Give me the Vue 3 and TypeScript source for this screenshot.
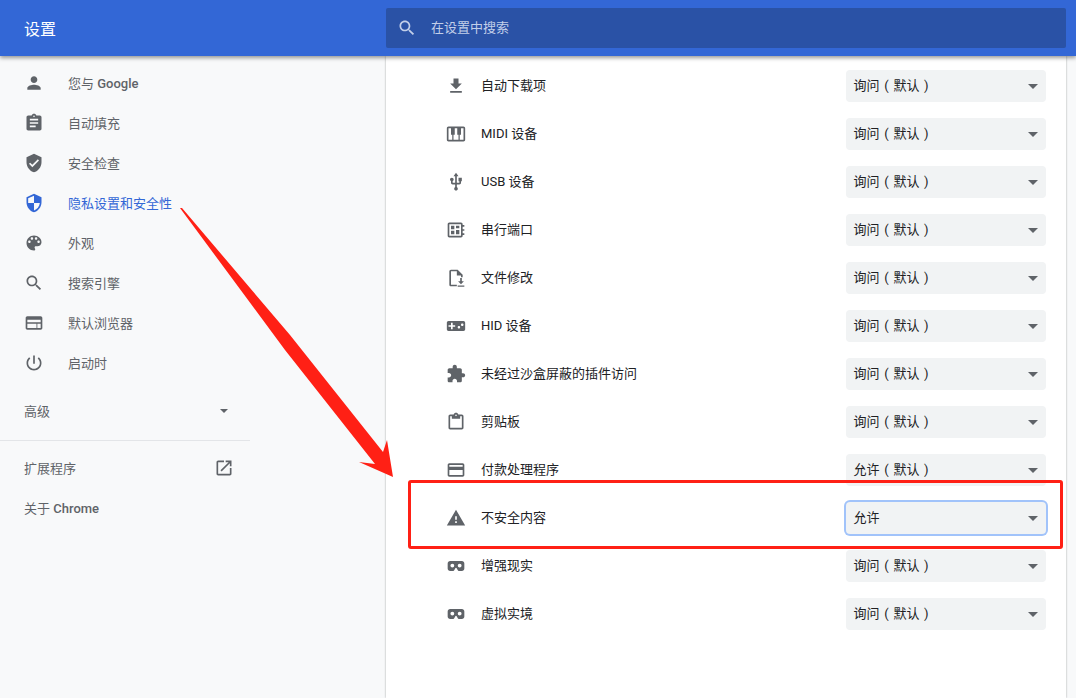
<template>
  <div class="page">
    <header class="topbar">
      <h1 class="title">设置</h1>
      <div class="search">
        <svg class="search-icon" viewBox="0 0 24 24"><path :d="icons.search" /></svg>
        <span class="lift">在设置中搜索</span>
      </div>
    </header>

    <div class="body">
      <nav class="sidebar">
        <a
          v-for="item in navItems"
          :key="item.label"
          class="nav-item"
          :class="{ active: item.active }"
        >
          <svg class="icon" viewBox="0 0 24 24"><path :d="item.icon" /></svg>
          <span class="lift">{{ item.label }}<b v-if="item.latin" class="latin">{{ item.latin }}</b></span>
        </a>
        <div class="advanced">
          <span class="lift">高级</span>
          <i class="caret small"></i>
        </div>
        <div class="divider"></div>
        <a class="link-row">
          <span class="lift">扩展程序</span>
          <svg class="icon" viewBox="0 0 24 24"><path :d="icons.openNew" /></svg>
        </a>
        <a class="link-row">
          <span class="lift">关于 <b class="latin">Chrome</b></span>
        </a>
      </nav>

      <main class="card">
        <div v-for="row in rows" :key="row.label" class="row">
          <svg class="icon" viewBox="0 0 24 24"><path :d="row.icon" fill-rule="evenodd" /></svg>
          <span class="row-label lift">{{ row.label }}</span>
          <div class="select" :class="{ focused: row.focused }">
            <span class="lift">{{ row.value || '询问 ( 默认 )' }}</span>
            <i class="caret"></i>
          </div>
        </div>
      </main>
      <div class="gutter"></div>
    </div>

    <!-- red markup drawn on top of the screenshot -->
    <div class="mark-box"></div>
    <svg class="mark-arrow" viewBox="0 0 1076 698">
      <polygon points="180,208 285,350 375,464 359,462 393,477 387,440 383,452 290,335 182,208" />
    </svg>
  </div>
</template>

<script setup lang="ts">
const icons = {
  search:
    'M15.5 14h-.79l-.28-.27C15.41 12.59 16 11.11 16 9.5 16 5.91 13.09 3 9.5 3S3 5.91 3 9.5 5.91 16 9.5 16c1.61 0 3.09-.59 4.23-1.57l.27.28v.79l5 4.99L20.49 19l-4.99-5zm-6 0C7.01 14 5 11.99 5 9.5S7.01 5 9.5 5 14 7.01 14 9.5 11.99 14 9.5 14z',
  openNew:
    'M19 19H5V5h7V3H5c-1.11 0-2 .9-2 2v14c0 1.1.89 2 2 2h14c1.1 0 2-.9 2-2v-7h-2v7zM14 3v2h3.59l-9.83 9.83 1.41 1.41L19 6.41V10h2V3h-7z',
  vr: 'M5 6h14c1.7 0 3 1.3 3 3v6c0 1.7-1.3 3-3 3h-3c-1 0-1.8-.6-2.2-1.5L13 15c-.3-.6-.6-1-1-1s-.7.4-1 1l-.8 1.5C9.8 17.4 9 18 8 18H5c-1.7 0-3-1.3-3-3V9c0-1.7 1.3-3 3-3zM7.6 9.2a2.3 2.3 0 1 0 0 4.6 2.3 2.3 0 0 0 0-4.6zM16.4 9.2a2.3 2.3 0 1 0 0 4.6 2.3 2.3 0 0 0 0-4.6z'
}

interface NavItem {
  label: string
  latin?: string
  icon: string
  active?: boolean
}

interface Row {
  label: string
  icon: string
  value?: string
  focused?: boolean
}

const navItems: NavItem[] = [
  {
    label: '您与 ',
    latin: 'Google',
    icon: 'M12 12c2.21 0 4-1.79 4-4s-1.79-4-4-4-4 1.79-4 4 1.79 4 4 4zm0 2c-2.67 0-8 1.34-8 4v2h16v-2c0-2.66-5.33-4-8-4z'
  },
  {
    label: '自动填充',
    icon: 'M19 3h-4.18C14.4 1.84 13.3 1 12 1c-1.3 0-2.4.84-2.82 2H5c-1.1 0-2 .9-2 2v14c0 1.1.9 2 2 2h14c1.1 0 2-.9 2-2V5c0-1.1-.9-2-2-2zm-7 0c.55 0 1 .45 1 1s-.45 1-1 1-1-.45-1-1 .45-1 1-1zm2 14H7v-2h7v2zm3-4H7v-2h10v2zm0-4H7V7h10v2z'
  },
  {
    label: '安全检查',
    icon: 'M12 1L3 5v6c0 5.55 3.84 10.74 9 12 5.16-1.26 9-6.45 9-12V5l-9-4zm-2 16l-4-4 1.41-1.41L10 14.17l6.59-6.59L18 9l-8 8z'
  },
  {
    label: '隐私设置和安全性',
    active: true,
    icon: 'M12 1L3 5v6c0 5.55 3.84 10.74 9 12 5.16-1.26 9-6.45 9-12V5l-9-4zm0 10.99h7c-.53 4.12-3.28 7.79-7 8.94V12H5V6.3l7-3.11v8.8z'
  },
  {
    label: '外观',
    icon: 'M12 3c-4.97 0-9 4.03-9 9s4.03 9 9 9c.83 0 1.5-.67 1.5-1.5 0-.39-.15-.74-.39-1.01-.23-.26-.38-.61-.38-.99 0-.83.67-1.5 1.5-1.5H16c2.76 0 5-2.24 5-5 0-4.42-4.03-8-9-8zm-5.5 9c-.83 0-1.5-.67-1.5-1.5S5.67 9 6.5 9 8 9.67 8 10.5 7.33 12 6.5 12zm3-4C8.67 8 8 7.33 8 6.5S8.67 5 9.5 5s1.5.67 1.5 1.5S10.33 8 9.5 8zm5 0c-.83 0-1.5-.67-1.5-1.5S13.67 5 14.5 5s1.5.67 1.5 1.5S15.33 8 14.5 8zm3 4c-.83 0-1.5-.67-1.5-1.5S16.67 9 17.5 9s1.5.67 1.5 1.5-.67 1.5-1.5 1.5z'
  },
  { label: '搜索引擎', icon: icons.search },
  {
    label: '默认浏览器',
    icon: 'M20 4H4c-1.1 0-1.99.9-1.99 2L2 18c0 1.1.9 2 2 2h16c1.1 0 2-.9 2-2V6c0-1.1-.9-2-2-2zm-5 14H4v-5h11v5zm5 0h-4v-5h4v5zm0-7H4V8h16v3z'
  },
  {
    label: '启动时',
    icon: 'M13 3h-2v10h2V3zm4.83 2.17l-1.42 1.42C17.99 7.86 19 9.81 19 12c0 3.87-3.13 7-7 7s-7-3.13-7-7c0-2.19 1.01-4.14 2.58-5.42L6.17 5.17C4.23 6.82 3 9.26 3 12c0 4.97 4.03 9 9 9s9-4.03 9-9c0-2.74-1.23-5.18-3.17-6.83z'
  }
]

const rows: Row[] = [
  { label: '自动下载项', icon: 'M19 9h-4V3H9v6H5l7 7 7-7zM5 18v2h14v-2H5z' },
  {
    label: 'MIDI 设备',
    icon: 'M21 3H3c-1.1 0-2 .9-2 2v14c0 1.1.9 2 2 2h18c1.1 0 2-.9 2-2V5c0-1.1-.9-2-2-2zM3 5h3v8h1.5v6H3zM9 19v-6h1.5V5h3v8H15v6zM16.5 19v-6H18V5h3v14z'
  },
  {
    label: 'USB 设备',
    icon: 'M15 7v4h1v2h-3V5h2l-3-4-3 4h2v8H8v-2.07c.7-.37 1.2-1.08 1.2-1.93 0-1.21-.99-2.2-2.2-2.2-1.21 0-2.2.99-2.2 2.2 0 .85.5 1.56 1.2 1.93V13c0 1.11.89 2 2 2h3v3.05c-.71.37-1.2 1.1-1.2 1.95 0 1.22.99 2.2 2.2 2.2 1.21 0 2.2-.98 2.2-2.2 0-.85-.49-1.58-1.2-1.95V15h3c1.11 0 2-.89 2-2v-2h1V7h-4z'
  },
  {
    label: '串行端口',
    icon: 'M18 3H4c-1.1 0-2 .9-2 2v14c0 1.1.9 2 2 2h14c1.1 0 2-.9 2-2v-1h2v-2h-2v-3h2v-2h-2V8h2V6h-2V5c0-1.1-.9-2-2-2zM4 5h14v14H4zM6 7h4v4H6zM12 7h4v3h-4zM6 13h4v4H6zM12 12h4v5h-4z'
  },
  {
    label: '文件修改',
    icon: 'M6 2c-1.1 0-2 .9-2 2v16c0 1.1.9 2 2 2h7v-2H6V4h7v5h5v2h2V8l-6-6H6zM17 12h2v4h2.5L18 19.5 14.5 16H17zM14 21h8v1.5h-8z'
  },
  {
    label: 'HID 设备',
    icon: 'M21 6H3c-1.1 0-2 .9-2 2v8c0 1.1.9 2 2 2h18c1.1 0 2-.9 2-2V8c0-1.1-.9-2-2-2zm-10 7H8v3H6v-3H3v-2h3V8h2v3h3v2zm4.5 2c-.83 0-1.5-.67-1.5-1.5s.67-1.5 1.5-1.5 1.5.67 1.5 1.5-.67 1.5-1.5 1.5zm4-3c-.83 0-1.5-.67-1.5-1.5S18.67 9 19.5 9s1.5.67 1.5 1.5-.67 1.5-1.5 1.5z'
  },
  {
    label: '未经过沙盒屏蔽的插件访问',
    icon: 'M20.5 11H19V7c0-1.1-.9-2-2-2h-4V3.5C13 2.12 11.88 1 10.5 1S8 2.12 8 3.5V5H4c-1.1 0-1.99.9-1.99 2v3.8H3.5c1.49 0 2.7 1.21 2.7 2.7s-1.21 2.7-2.7 2.7H2V20c0 1.1.9 2 2 2h3.8v-1.5c0-1.49 1.21-2.7 2.7-2.7 1.49 0 2.7 1.21 2.7 2.7V22H17c1.1 0 2-.9 2-2v-4h1.5c1.38 0 2.5-1.12 2.5-2.5S21.88 11 20.5 11z'
  },
  {
    label: '剪贴板',
    icon: 'M19 3h-4.18C14.4 1.84 13.3 1 12 1c-1.3 0-2.4.84-2.82 2H5c-1.1 0-2 .9-2 2v14c0 1.1.9 2 2 2h14c1.1 0 2-.9 2-2V5c0-1.1-.9-2-2-2zM5 5h2v3h10V5h2v14H5zM12 3c.55 0 1 .45 1 1s-.45 1-1 1-1-.45-1-1 .45-1 1-1z'
  },
  {
    label: '付款处理程序',
    value: '允许 ( 默认 )',
    icon: 'M20 4H4c-1.11 0-1.99.89-1.99 2L2 18c0 1.11.89 2 2 2h16c1.11 0 2-.89 2-2V6c0-1.11-.89-2-2-2zm0 14H4v-6h16v6zm0-10H4V6h16v2z'
  },
  {
    label: '不安全内容',
    value: '允许',
    focused: true,
    icon: 'M1 21h22L12 2 1 21zm12-3h-2v-2h2v2zm0-4h-2v-4h2v4z'
  },
  { label: '增强现实', icon: icons.vr },
  { label: '虚拟实境', icon: icons.vr }
]
</script>

<style scoped>
.page {
  position: relative;
  display: flex;
  flex-direction: column;
  height: 698px;
  overflow: hidden;
  background: #f8f9fa;
  font-family: Roboto, 'Noto Sans CJK SC', sans-serif;
  font-size: 13px;
  color: #5f6368;
}
.lift {
  padding-bottom: 4px;
}
.sidebar .lift {
  padding-bottom: 2px;
}
.topbar {
  position: relative;
  z-index: 2;
  display: flex;
  align-items: center;
  flex: none;
  height: 56px;
  background: #3367d6;
  box-shadow: 0 2px 4px rgba(0, 0, 0, 0.4);
}
.title {
  width: 362px;
  margin: 0 0 0 24px;
  font-size: 16px;
  font-weight: 400;
  color: #fff;
}
.search {
  display: flex;
  align-items: center;
  flex: 1;
  height: 40px;
  margin-right: 10px;
  padding-left: 11px;
  border-radius: 2px;
  background: #2a52a6;
  color: #c2cfe9;
}
.search-icon {
  width: 20px;
  height: 20px;
  margin-right: 14px;
  fill: #c2cfe9;
}
.body {
  display: flex;
  flex: 1;
  min-height: 0;
}
.sidebar {
  flex: none;
  width: 386px;
  padding-top: 7px;
}
.icon {
  flex: none;
  width: 20px;
  height: 20px;
  fill: #5f6368;
}
.nav-item {
  display: flex;
  align-items: center;
  gap: 24px;
  height: 40px;
  padding-left: 24px;
}
.nav-item.active {
  color: #3367d6;
}
.nav-item.active .icon {
  fill: #3367d6;
}
.latin {
  font-weight: 500;
}
.advanced {
  display: flex;
  align-items: center;
  justify-content: space-between;
  width: 250px;
  height: 48px;
  box-sizing: border-box;
  margin-top: 4px;
  padding: 0 22px 0 24px;
}
.divider {
  width: 250px;
  height: 1px;
  margin: 5px 0 7px;
  background: #e3e5e8;
}
.link-row {
  display: flex;
  align-items: center;
  justify-content: space-between;
  width: 250px;
  height: 40px;
  box-sizing: border-box;
  padding: 0 16px 0 24px;
}
.card {
  flex: none;
  box-sizing: border-box;
  width: 680px;
  padding: 6px 20px 0 60px;
  background: #fff;
  box-shadow: 0 0 2px rgba(60, 64, 67, 0.45);
}
.row {
  display: flex;
  align-items: center;
  height: 48px;
  color: #202124;
}
.row-label {
  flex: 1;
  margin-left: 15px;
}
.select {
  display: flex;
  align-items: center;
  justify-content: space-between;
  box-sizing: border-box;
  width: 200px;
  height: 32px;
  padding: 0 8px 0 7.5px;
  border-radius: 4px;
  background: #f1f3f4;
  word-spacing: 1.5px;
}
.select.focused {
  box-shadow: 0 0 0 2px #a1c3fa;
}
.caret {
  width: 0;
  height: 0;
  border-left: 5px solid transparent;
  border-right: 5px solid transparent;
  border-top: 5px solid #5f6368;
}
.caret.small {
  border-left-width: 4px;
  border-right-width: 4px;
  border-top-width: 4px;
}
.gutter {
  flex: 1;
}
.mark-box {
  position: absolute;
  z-index: 3;
  left: 408px;
  top: 480px;
  box-sizing: border-box;
  width: 655px;
  height: 69px;
  border: 3px solid #ff2015;
  border-radius: 3px;
}
.mark-arrow {
  position: absolute;
  z-index: 3;
  left: 0;
  top: 0;
  width: 1076px;
  height: 698px;
  fill: #ff2015;
  pointer-events: none;
}
</style>

<style>
html,
body {
  margin: 0;
  background: #f8f9fa;
}
</style>
